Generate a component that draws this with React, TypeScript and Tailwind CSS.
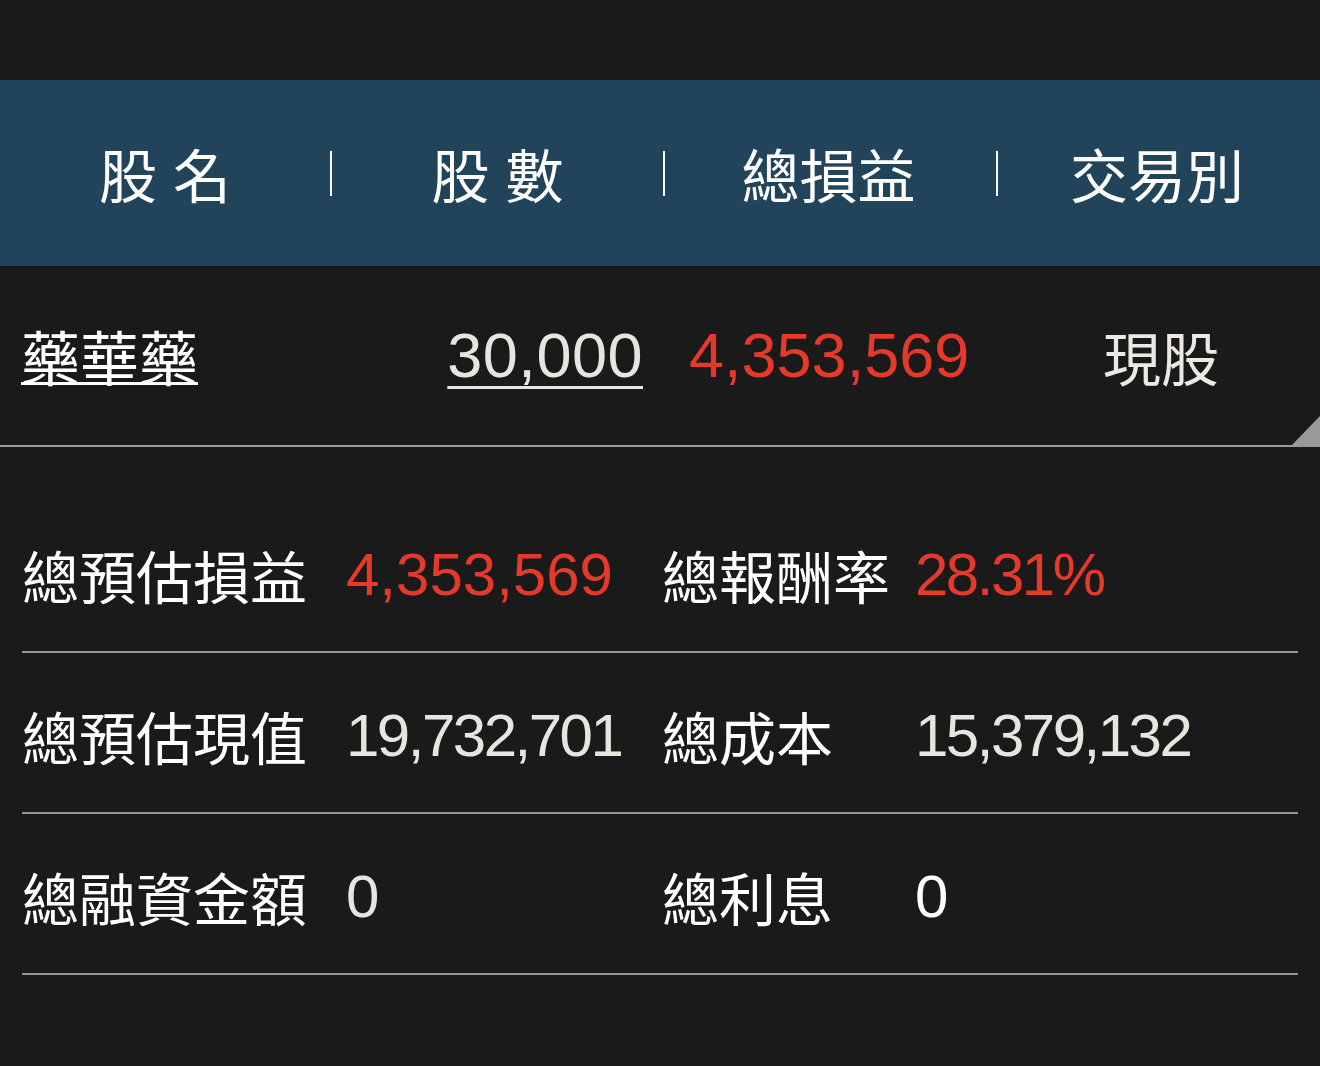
import React from "react";

function HeaderSep() {
  return <div className="w-[2px] h-[45px] bg-white shrink-0" />;
}

type Item = { label: string; value: string; red?: boolean; white?: boolean };

const rows: [Item, Item][] = [
  [
    { label: "總預估損益", value: "4,353,569", red: true },
    { label: "總報酬率", value: "28.31%", red: true },
  ],
  [
    { label: "總預估現值", value: "19,732,701" },
    { label: "總成本", value: "15,379,132" },
  ],
  [
    { label: "總融資金額", value: "0" },
    { label: "總利息", value: "0", white: true },
  ],
];

function valueClass(it: Item) {
  const track = it.value.includes("1") ? " tracking-[-2.5px]" : "";
  if (it.red) return "text-[#e5392b]" + track;
  if (it.white) return "text-white" + track;
  return "text-[#e8e5df]" + track;
}

export default function App() {
  return (
    <div className="w-full min-h-[1066px] bg-[#1a1a1a] font-['Noto_Sans_CJK_TC',sans-serif]">
      <div className="h-[80px]" />

      {/* Header */}
      <div className="h-[186px] bg-[#21445a] flex items-center text-white text-[58px] leading-none">
        <div className="w-[330px] flex justify-center gap-[16px]">
          <span>股</span>
          <span>名</span>
        </div>
        <HeaderSep />
        <div className="w-[331px] flex justify-center gap-[16px]">
          <span>股</span>
          <span>數</span>
        </div>
        <HeaderSep />
        <div className="w-[331px] flex justify-center pr-[4px]">總損益</div>
        <HeaderSep />
        <div className="flex-1 flex justify-center pr-[4px]">交易別</div>
      </div>

      {/* Stock row */}
      <div className="relative h-[181px] border-b-2 border-[#999999] flex items-center leading-none">
        <div className="w-[330px] pl-[21px] text-white text-[59px]">
          <span className="underline decoration-[3px] underline-offset-[1px]">藥華藥</span>
        </div>
        <div className="w-[333px] pr-[20px] flex justify-end text-[#e8e5df] text-[63px] font-['Liberation_Sans',sans-serif]">
          <span className="underline decoration-[3px] underline-offset-[9px] tracking-[0.5px]">30,000</span>
        </div>
        <div className="w-[333px] pl-[26px] text-[#e5392b] text-[63px] font-['Liberation_Sans',sans-serif]">
          4,353,569
        </div>
        <div className="flex-1 flex justify-center text-[#ece9e4] text-[58px] pl-[6px]">現股</div>
        <div className="absolute right-0 bottom-[-2px] w-[30px] h-[31px] bg-[#999999] [clip-path:polygon(100%_0,100%_100%,0_100%)]" />
      </div>

      {/* Summary */}
      <div className="mt-[45px] mx-[22px]">
        {rows.map((r, idx) => (
          <div
            key={idx}
            className="h-[161px] pt-[6px] border-b-2 border-[#959595] grid grid-cols-[324px_316px_253px_1fr] items-center leading-none"
          >
            <div className="text-white text-[57px]">{r[0].label}</div>
            <div className={`text-[60px] font-['Liberation_Sans',sans-serif] ${valueClass(r[0])}`}>
              {r[0].value}
            </div>
            <div className="text-white text-[57px]">{r[1].label}</div>
            <div className={`text-[60px] font-['Liberation_Sans',sans-serif] ${valueClass(r[1])}`}>
              {r[1].value}
            </div>
          </div>
        ))}
      </div>
    </div>
  );
}
